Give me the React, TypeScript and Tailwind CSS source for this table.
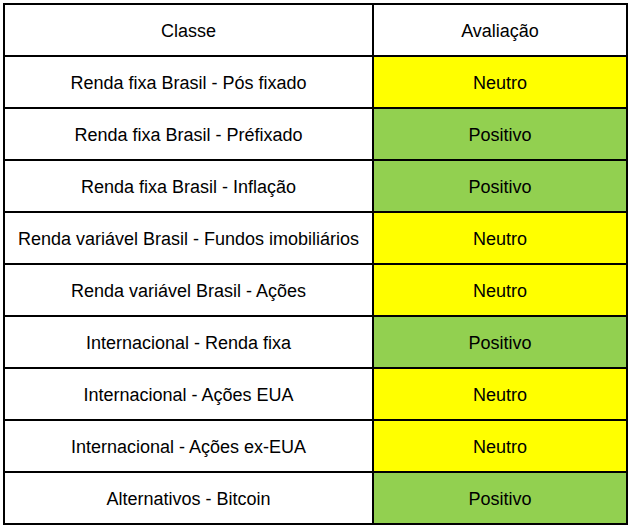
const rows: { classe: string; aval: "Neutro" | "Positivo" }[] = [
  { classe: "Renda fixa Brasil - Pós fixado", aval: "Neutro" },
  { classe: "Renda fixa Brasil - Préfixado", aval: "Positivo" },
  { classe: "Renda fixa Brasil - Inflação", aval: "Positivo" },
  { classe: "Renda variável Brasil - Fundos imobiliários", aval: "Neutro" },
  { classe: "Renda variável Brasil - Ações", aval: "Neutro" },
  { classe: "Internacional - Renda fixa", aval: "Positivo" },
  { classe: "Internacional - Ações EUA", aval: "Neutro" },
  { classe: "Internacional - Ações ex-EUA", aval: "Neutro" },
  { classe: "Alternativos - Bitcoin", aval: "Positivo" },
]

export default function App() {
  return (
    <div className="min-h-screen bg-white pl-[3px] pt-[3px] font-['Liberation_Sans',Arial,sans-serif] text-[18px] text-black">
      <div className="grid w-[625px] grid-cols-[367px_252px] auto-rows-[50px] gap-[2px] bg-black p-[2px]">
        <div className="flex items-center justify-center bg-white pt-[2px]">Classe</div>
        <div className="flex items-center justify-center bg-white pt-[2px]">Avaliação</div>
        {rows.map((r) => (
          <>
            <div key={r.classe} className="flex items-center justify-center bg-white pt-[2px]">
              {r.classe}
            </div>
            <div
              key={r.classe + "-a"}
              className={
                r.aval === "Neutro"
                  ? "flex items-center justify-center bg-[#ffff00] pt-[2px]"
                  : "flex items-center justify-center bg-[#92d050] pt-[2px]"
              }
            >
              {r.aval}
            </div>
          </>
        ))}
      </div>
    </div>
  )
}
